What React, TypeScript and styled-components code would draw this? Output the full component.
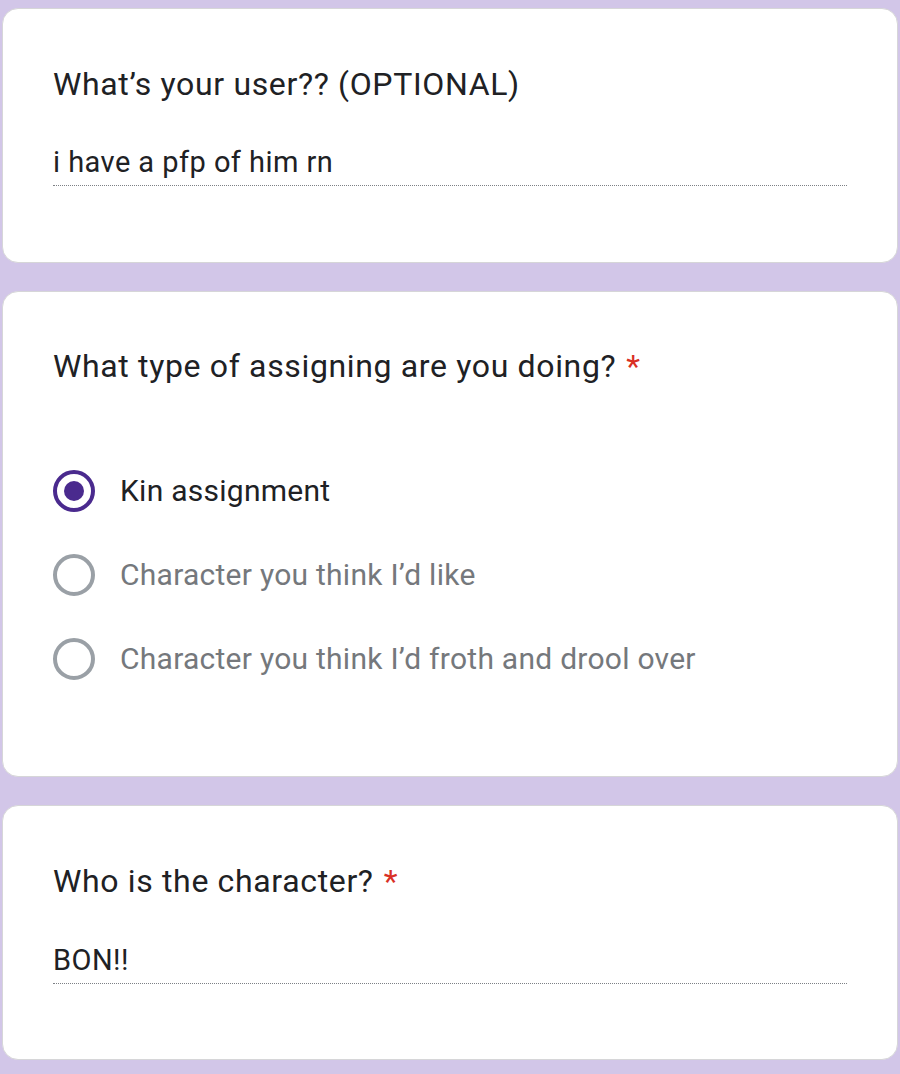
import React from "react";
import styled, { createGlobalStyle } from "styled-components";

const Global = createGlobalStyle`
  html, body { margin: 0; padding: 0; background: #d2c6e8; }
  body { font-family: Roboto, "Noto Sans", Arial, sans-serif; }
`;

const Page = styled.div`
  display: flex;
  flex-direction: column;
  gap: 28px;
  padding: 8px 2px 14px 2px;
  background: #d2c6e8;
`;

const Card = styled.section<{ $pt: number; $pb: number }>`
  background: #ffffff;
  border: 1px solid #d6d6d8;
  border-radius: 16px;
  padding: ${(p) => p.$pt}px 50px ${(p) => p.$pb}px 50px;
  display: flex;
  flex-direction: column;
`;

const Title = styled.div`
  font-size: 32px;
  line-height: 40px;
  color: #202124;
  letter-spacing: 0.65px;
`;

const Star = styled.span`
  color: #d93025;
  margin-left: 10px;
`;

const Answer = styled.div<{ $mt: number }>`
  margin-top: ${(p) => p.$mt}px;
  font-size: 29px;
  line-height: 36px;
  color: #202124;
  letter-spacing: 0.45px;
  padding-bottom: 5px;
  border-bottom: 1px dotted #7d8085;
`;

const Options = styled.div`
  margin-top: 63px;
  display: flex;
  flex-direction: column;
`;

const Option = styled.div`
  height: 84px;
  display: flex;
  align-items: center;
  gap: 25px;
`;

const Radio = styled.span<{ $on: boolean }>`
  box-sizing: border-box;
  width: 42px;
  height: 42px;
  border-radius: 50%;
  border: 4px solid ${(p) => (p.$on ? "#4a2a8e" : "#9aa0a6")};
  display: flex;
  align-items: center;
  justify-content: center;
  flex: none;
  &::after {
    content: "";
    display: ${(p) => (p.$on ? "block" : "none")};
    width: 20px;
    height: 20px;
    border-radius: 50%;
    background: #4a2a8e;
  }
`;

const OptionLabel = styled.span<{ $on: boolean }>`
  font-size: 30px;
  line-height: 36px;
  letter-spacing: 0.26px;
  color: ${(p) => (p.$on ? "#202124" : "#75787c")};
`;

const options = [
  { label: "Kin assignment", on: true },
  { label: "Character you think I’d like", on: false },
  { label: "Character you think I’d froth and drool over", on: false },
];

export default function App() {
  return (
    <>
      <Global />
      <Page>
        <Card $pt={55} $pb={76}>
          <Title>What’s your user?? (OPTIONAL)</Title>
          <Answer $mt={40}>i have a pfp of him rn</Answer>
        </Card>
        <Card $pt={54} $pb={75}>
          <Title>
            What type of assigning are you doing?<Star>*</Star>
          </Title>
          <Options>
            {options.map((o) => (
              <Option key={o.label}>
                <Radio $on={o.on} />
                <OptionLabel $on={o.on}>{o.label}</OptionLabel>
              </Option>
            ))}
          </Options>
        </Card>
        <Card $pt={55} $pb={75}>
          <Title>
            Who is the character?<Star>*</Star>
          </Title>
          <Answer $mt={41}>BON!!</Answer>
        </Card>
      </Page>
    </>
  );
}
